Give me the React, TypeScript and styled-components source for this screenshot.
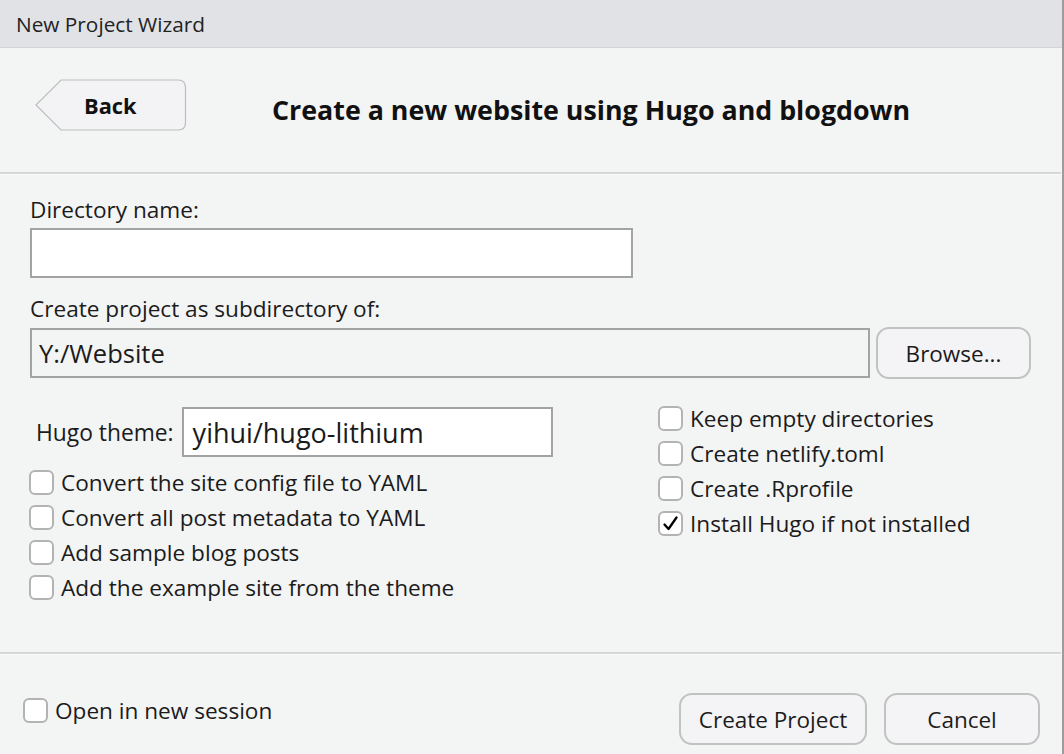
import React from "react";
import { styled, createGlobalStyle } from "styled-components";

const GlobalStyle = createGlobalStyle`
    html, body {
        margin: 0;
        padding: 0;
        background: #f3f4f4;
    }
    body {
        font-family: "Open Sans", "Noto Sans", "Liberation Sans", sans-serif;
        color: #1b1b1b;
    }
`;

interface CheckProps {
    label: string;
    checked?: boolean;
}

const Check = ({ label, checked }: CheckProps) => {
    return (
        <CheckRow>
            <CheckBox>
                {checked && (
                    <svg viewBox="0 0 21 21" width="21" height="21">
                        <path
                            d="M4.5 11.5 L8.5 16 L16.5 4.5"
                            fill="none"
                            stroke="#000"
                            strokeWidth="2.3"
                            strokeLinecap="round"
                            strokeLinejoin="round"
                        />
                    </svg>
                )}
            </CheckBox>
            <CheckLabel>{label}</CheckLabel>
        </CheckRow>
    );
};

const BackButton = () => {
    return (
        <BackWrap type="button">
            <BackShape viewBox="0 0 152 52" width="152" height="52">
                <path
                    d="M1 26 L26 1 H143 Q150.5 1 150.5 8.5 V43.5 Q150.5 51 143 51 H26 Z"
                    fill="#f3f3f5"
                    stroke="#bdbdbd"
                    strokeWidth="1.2"
                />
            </BackShape>
            <BackText>Back</BackText>
        </BackWrap>
    );
};

const App = () => {
    return (
        <>
            <GlobalStyle />
            <Window>
                <TitleBar>New Project Wizard</TitleBar>
                <Header>
                    <BackButton />
                    <Heading>Create a new website using Hugo and blogdown</Heading>
                </Header>
                <Separator />
                <Form>
                    <FieldLabel>Directory name:</FieldLabel>
                    <TextBox width={603} />
                    <FieldLabel $top={17}>Create project as subdirectory of:</FieldLabel>
                    <PathRow>
                        <PathBox>Y:/Website</PathBox>
                        <Button $w={155}>Browse...</Button>
                    </PathRow>
                    <Columns>
                        <LeftColumn>
                            <ThemeRow>
                                <ThemeLabel>Hugo theme:</ThemeLabel>
                                <ThemeInput>yihui/hugo-lithium</ThemeInput>
                            </ThemeRow>
                            <Check label="Convert the site config file to YAML" />
                            <Check label="Convert all post metadata to YAML" />
                            <Check label="Add sample blog posts" />
                            <Check label="Add the example site from the theme" />
                        </LeftColumn>
                        <RightColumn>
                            <Check label="Keep empty directories" />
                            <Check label="Create netlify.toml" />
                            <Check label="Create .Rprofile" />
                            <Check label="Install Hugo if not installed" checked />
                        </RightColumn>
                    </Columns>
                </Form>
                <Separator />
                <Footer>
                    <SessionCheck>
                        <Check label="Open in new session" />
                    </SessionCheck>
                    <FooterButtons>
                        <Button $w={188}>Create Project</Button>
                        <Button $w={156}>Cancel</Button>
                    </FooterButtons>
                </Footer>
            </Window>
        </>
    );
};

export default App;

const Window = styled.div`
    width: 1062px;
    height: 754px;
    border-right: 2px solid #9c9c9c;
    display: flex;
    flex-direction: column;
    background: #f3f4f4;
    overflow: hidden;
`;

const TitleBar = styled.div`
    height: 47px;
    flex: none;
    background: #e1e2e6;
    border-bottom: 1px solid #d3d4d8;
    padding-left: 16px;
    display: flex;
    align-items: center;
    font-size: 20.8px;
    color: #222;
`;

const Header = styled.div`
    height: 122px;
    flex: none;
    display: flex;
    align-items: center;
    padding-left: 35px;
    gap: 85px;
    padding-bottom: 2px;
`;

const BackWrap = styled.button`
    position: relative;
    width: 152px;
    height: 52px;
    border: none;
    background: transparent;
    padding: 0 0 0 49px;
    margin-bottom: 8px;
    display: flex;
    align-items: center;
    font-family: inherit;
    cursor: pointer;
`;

const BackShape = styled.svg`
    position: absolute;
    left: 0;
    top: 0;
`;

const BackText = styled.span`
    position: relative;
    font-size: 21.8px;
    font-weight: 700;
    color: #111;
`;

const Heading = styled.h1`
    margin: 0;
    font-size: 26.8px;
    font-weight: 700;
    color: #111;
`;

const Separator = styled.div`
    height: 2px;
    flex: none;
    background: #d6d7d8;
    box-shadow: 0 1px 0 #fbfbfb;
    margin-right: 1px;
`;

const Form = styled.div`
    height: 478px;
    flex: none;
    padding: 22px 0 0 30px;
    box-sizing: border-box;
    display: flex;
    flex-direction: column;
`;

const FieldLabel = styled.div<{ $top?: number }>`
    font-size: 22.6px;
    line-height: 28px;
    margin-top: ${(p) => p.$top ?? 0}px;
    margin-bottom: 4px;
`;

const TextBox = styled.div<{ width: number }>`
    width: ${(p) => p.width}px;
    height: 50px;
    box-sizing: border-box;
    background: #fff;
    border: 2px solid #a3a3a3;
`;

const PathRow = styled.div`
    display: flex;
    align-items: center;
    gap: 6px;
`;

const PathBox = styled.div`
    width: 840px;
    height: 50px;
    box-sizing: border-box;
    border: 2px solid #a3a3a3;
    padding-left: 7px;
    display: flex;
    align-items: center;
    font-size: 25.5px;
`;

const Button = styled.button<{ $w: number }>`
    width: ${(p) => p.$w}px;
    height: 52px;
    box-sizing: border-box;
    border: 2px solid #c2c2c2;
    border-radius: 13px;
    background: #f4f4f6;
    font-family: inherit;
    font-size: 22.5px;
    color: #1b1b1b;
    cursor: pointer;
`;

const Columns = styled.div`
    display: grid;
    grid-template-columns: 628px 1fr;
    margin-top: 22px;
`;

const LeftColumn = styled.div`
    display: flex;
    flex-direction: column;
    margin-left: -1px;
`;

const RightColumn = styled.div`
    display: flex;
    flex-direction: column;
`;

const ThemeRow = styled.div`
    display: flex;
    align-items: center;
    height: 50px;
    padding-left: 7px;
    gap: 8px;
    margin: 6px 0 8px;
`;

const ThemeLabel = styled.span`
    font-size: 22.8px;
`;

const ThemeInput = styled.div`
    width: 371px;
    height: 50px;
    box-sizing: border-box;
    background: #fff;
    border: 2px solid #a3a3a3;
    padding-left: 9px;
    display: flex;
    align-items: center;
    font-size: 27px;
`;

const CheckRow = styled.label`
    display: flex;
    align-items: center;
    height: 35px;
    gap: 7px;
`;

const CheckBox = styled.span`
    width: 25px;
    height: 25px;
    box-sizing: border-box;
    border: 2px solid #b3b3b3;
    border-radius: 6px;
    background: #fff;
    display: flex;
    align-items: center;
    justify-content: center;
    flex: none;
`;

const CheckLabel = styled.span`
    font-size: 22.6px;
`;

const Footer = styled.div`
    flex: 1;
    display: flex;
    align-items: center;
    justify-content: space-between;
    padding: 30px 22px 0 23px;
`;

const SessionCheck = styled.div`
    margin-bottom: 18px;
`;

const FooterButtons = styled.div`
    display: flex;
    gap: 17px;
`;
